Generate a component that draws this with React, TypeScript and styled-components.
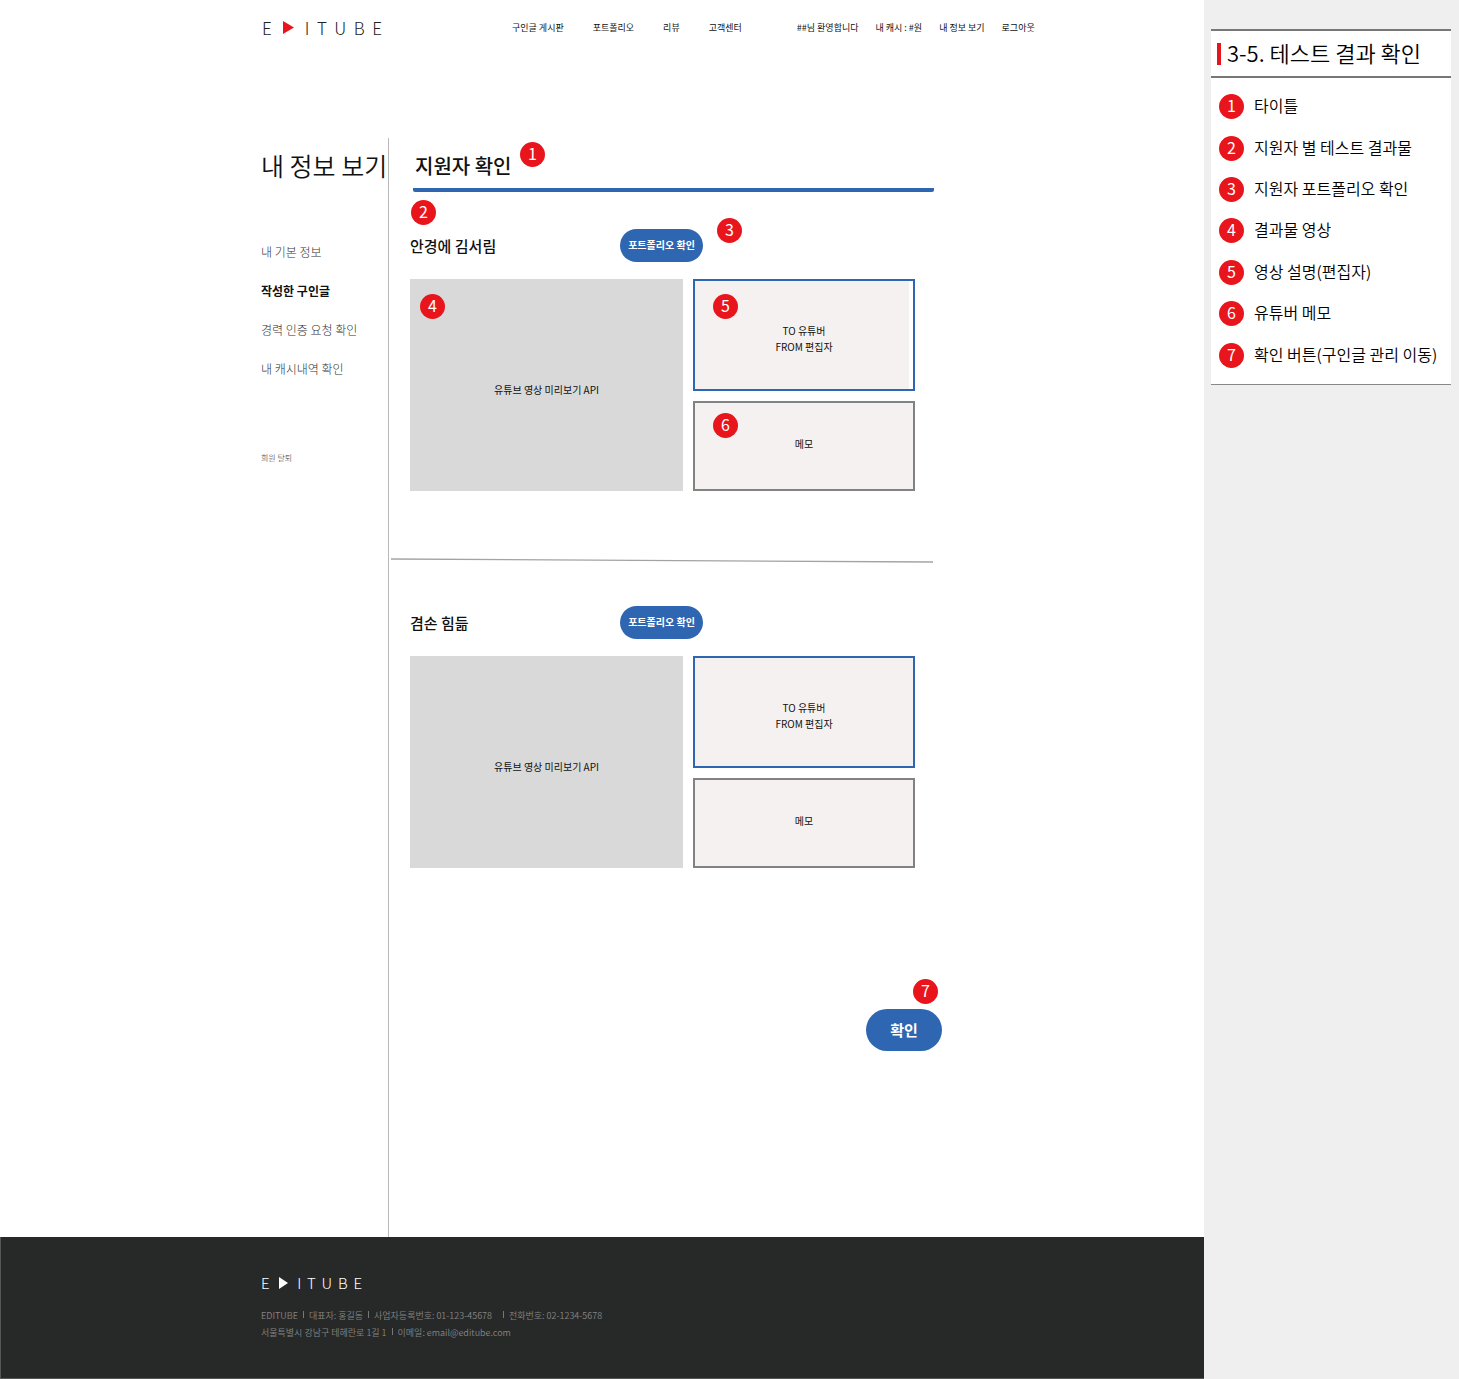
import React from "react";
import styled, { createGlobalStyle } from "styled-components";

const BLUE = "#2f66b1";
const RED = "#e8161c";

const GlobalStyle = createGlobalStyle`
  *, *::before, *::after { box-sizing: border-box; }
  body {
    margin: 0;
    background: #fff;
    color: #111;
    font-family: "Noto Sans CJK KR", "Noto Sans", sans-serif;
  }
  h1, h2, h3, p, ul, ol { margin: 0; padding: 0; font-weight: inherit; }
  ul, ol { list-style: none; }
  a { color: inherit; text-decoration: none; }
  button { font-family: inherit; cursor: pointer; }
`;

const Page = styled.div`
  display: grid;
  grid-template-columns: minmax(0, 1fr) 255px;
  min-height: 100vh;
`;

const Site = styled.div`
  display: grid;
  grid-template-rows: auto 1fr auto;
`;

const Header = styled.header`
  display: flex;
  align-items: center;
  height: 55px;
  margin-bottom: 83px;
  padding-left: 262px;
`;

const LogoLink = styled.a<{ $small?: boolean }>`
  display: flex;
  align-items: center;
  justify-content: space-between;
  width: ${(p) => (p.$small ? 101 : 120)}px;
  font-size: ${(p) => (p.$small ? 15 : 17)}px;
  line-height: 20px;
  font-weight: 300;
  color: ${(p) => (p.$small ? "#fff" : "#222")};
`;

const PlayMark = styled.svg<{ $small?: boolean }>`
  width: ${(p) => (p.$small ? 9 : 11)}px;
  height: ${(p) => (p.$small ? 12 : 13)}px;
  margin: 0 3px 0 4px;
  fill: ${(p) => (p.$small ? "#fff" : RED)};
`;

const Nav = styled.nav<{ $gap: number; $before: number }>`
  display: flex;
  gap: ${(p) => p.$gap}px;
  margin-left: ${(p) => p.$before}px;
  font-size: 9px;
  line-height: 16px;
  white-space: nowrap;
`;

const Body = styled.div`
  display: grid;
  grid-template-columns: 128px minmax(0, 553px);
  padding-left: 261px;
`;

const Side = styled.aside`
  border-right: 1px solid #b8b8b8;
  padding-top: 7px;
`;

const SideTitle = styled.h1`
  font-size: 25px;
  line-height: 40px;
  font-weight: 350;
  white-space: nowrap;
`;

const SideMenu = styled.ul`
  display: grid;
  gap: 19px;
  margin: 57px 0 69px;
  font-size: 12px;
  line-height: 20px;
`;

const SideLink = styled.a<{ $active?: boolean }>`
  color: ${(p) => (p.$active ? "#111" : "#333")};
  font-weight: ${(p) => (p.$active ? 700 : 200)};
  white-space: nowrap;
`;

const Leave = styled.a`
  display: block;
  font-size: 8px;
  line-height: 20px;
  font-weight: 200;
  color: #333;
`;

const Content = styled.main`
  padding-left: 21px;
`;

const TitleBar = styled.div`
  width: 521px;
  margin-left: 3px;
  padding: 12px 0 6px 2px;
  border-bottom: 4px solid ${BLUE};
  border-radius: 2px;
`;

const Title = styled.h2`
  position: relative;
  width: max-content;
  font-size: 20px;
  line-height: 32px;
  font-weight: 500;
`;

const Dot = styled.span`
  display: grid;
  justify-content: center;
  flex: none;
  width: 25px;
  height: 25px;
  border-radius: 50%;
  background: ${RED};
  color: #fff;
  font-size: 16px;
  line-height: 22px;
  font-weight: 400;
`;

const Pin = styled(Dot)<{ $x: number; $y: number }>`
  position: absolute;
  left: ${(p) => p.$x}px;
  top: ${(p) => p.$y}px;
`;

const Applicant = styled.article`
  width: 505px;
`;

const ApplicantHead = styled.div`
  position: relative;
  display: grid;
  grid-template-columns: 210px max-content;
  align-items: center;
  margin-bottom: 17px;
`;

const Name = styled.h3`
  font-size: 15px;
  line-height: 33px;
  font-weight: 500;
`;

const PillButton = styled.button<{ $large?: boolean }>`
  width: ${(p) => (p.$large ? 76 : 83)}px;
  height: ${(p) => (p.$large ? 42 : 33)}px;
  padding: 0 0 1px;
  border: 0;
  border-radius: 21px;
  background: ${BLUE};
  color: #fff;
  font-size: ${(p) => (p.$large ? 15 : 10)}px;
  line-height: 20px;
  font-weight: 700;
`;

const Panels = styled.div`
  display: grid;
  grid-template-columns: 273fr 222fr;
  grid-template-rows: 112px 90px;
  gap: 10px;
  font-size: 10px;
  line-height: 16px;
  text-align: center;
`;

const Panel = styled.div`
  position: relative;
  display: grid;
  place-content: center;
`;

const Video = styled(Panel)`
  grid-row: span 2;
  padding-top: 10px;
  background: #d9d9d9;
`;

const Note = styled(Panel)<{ $strip?: boolean }>`
  padding-top: 7px;
  border: 2px solid ${BLUE};
  background: #f5f1f0;
  box-shadow: ${(p) => (p.$strip ? "inset -4px 0 0 #fff" : "none")};
`;

const Memo = styled(Panel)`
  padding-bottom: 4px;
  border: 2px solid #828282;
  background: #f5f1f0;
`;

const SlantedRule = styled.svg`
  display: block;
  width: 542px;
  height: 5px;
  margin: 67px 0 43px -19px;
`;

const Actions = styled.div`
  display: flex;
  justify-content: flex-end;
  width: 532px;
  margin-top: 141px;
`;

const ActionSlot = styled.div`
  position: relative;
`;

const First = styled.div`
  position: relative;
  padding-top: 37px;
`;

const Footer = styled.footer`
  min-height: 142px;
  padding: 36px 0 36px 260px;
  border: solid #555756;
  border-width: 0 0 1px 1px;
  background: #272928;
  color: #858585;
  font-size: 9px;
  line-height: 17px;
  font-weight: 350;
`;

const FooterLines = styled.div`
  margin-top: 14px;
`;

const FooterLine = styled.p`
  display: flex;
  align-items: center;
`;

const Bar = styled.span<{ $wide?: boolean }>`
  width: 1px;
  height: 7px;
  margin: 0 5px 3px ${(p) => (p.$wide ? 11 : 5)}px;
  background: #777;
`;

const Rail = styled.aside`
  padding: 29px 8px 0 7px;
  background: #efefef;
`;

const Legend = styled.section`
  border-top: 2px solid #777;
  border-bottom: 1px solid #888;
  background: #fff;
  color: #000;
  font-weight: 350;
`;

const LegendTitle = styled.h2`
  display: flex;
  align-items: center;
  gap: 6px;
  height: 47px;
  padding-left: 6px;
  border-bottom: 2px solid #777;
  font-size: 22px;
  line-height: 32px;
  white-space: nowrap;

  &::before {
    content: "";
    width: 4px;
    height: 22px;
    background: ${RED};
  }
`;

const LegendTitleText = styled.span`
  padding-bottom: 4px;
`;

const LegendList = styled.ol`
  display: grid;
  grid-auto-rows: 1fr;
  height: 290px;
  margin: 8px 0;
  padding-left: 8px;
`;

const LegendItem = styled.li`
  display: flex;
  align-items: center;
  gap: 10px;
  font-size: 16px;
  line-height: 24px;
  white-space: nowrap;
`;

const LegendText = styled.span`
  padding-bottom: 3px;
`;

function Logo({ small }: { small?: boolean }) {
  return (
    <LogoLink href="#" aria-label="EDITUBE" $small={small}>
      <span>E</span>
      <PlayMark viewBox="0 0 11 13" preserveAspectRatio="none" $small={small} aria-hidden="true">
        <path d="M0 0 L11 6.5 L0 13 Z" />
      </PlayMark>
      <span>I</span>
      <span>T</span>
      <span>U</span>
      <span>B</span>
      <span>E</span>
    </LogoLink>
  );
}

function ApplicantResult({ name, pinned }: { name: string; pinned?: boolean }) {
  return (
    <Applicant>
      <ApplicantHead>
        <Name>{name}</Name>
        <PillButton type="button">포트폴리오 확인</PillButton>
        {pinned && <Pin $x={307} $y={-11}>3</Pin>}
      </ApplicantHead>
      <Panels>
        <Video>
          {pinned && <Pin $x={10} $y={15}>4</Pin>}
          <p>유튜브 영상 미리보기 API</p>
        </Video>
        <Note $strip={pinned}>
          {pinned && <Pin $x={18} $y={13}>5</Pin>}
          <p>TO 유튜버</p>
          <p>FROM 편집자</p>
        </Note>
        <Memo>
          {pinned && <Pin $x={18} $y={10}>6</Pin>}
          <p>메모</p>
        </Memo>
      </Panels>
    </Applicant>
  );
}

const menu = ["내 기본 정보", "작성한 구인글", "경력 인증 요청 확인", "내 캐시내역 확인"];
const legend = [
  "타이틀",
  "지원자 별 테스트 결과물",
  "지원자 포트폴리오 확인",
  "결과물 영상",
  "영상 설명(편집자)",
  "유튜버 메모",
  "확인 버튼(구인글 관리 이동)",
];

export default function App() {
  return (
    <>
      <GlobalStyle />
      <Page>
        <Site>
          <Header>
            <Logo />
            <Nav $gap={29} $before={130}>
              <a href="#">구인글 게시판</a>
              <a href="#">포트폴리오</a>
              <a href="#">리뷰</a>
              <a href="#">고객센터</a>
            </Nav>
            <Nav $gap={17} $before={55}>
              <span>##님 환영합니다</span>
              <a href="#">내 캐시 : #원</a>
              <a href="#">내 정보 보기</a>
              <a href="#">로그아웃</a>
            </Nav>
          </Header>
          <Body>
            <Side>
              <SideTitle>내 정보 보기</SideTitle>
              <SideMenu>
                {menu.map((label, i) => (
                  <li key={label}>
                    <SideLink href="#" $active={i === 1}>{label}</SideLink>
                  </li>
                ))}
              </SideMenu>
              <Leave href="#">회원 탈퇴</Leave>
            </Side>
            <Content>
              <TitleBar>
                <Title>
                  지원자 확인
                  <Pin $x={105} $y={-8}>1</Pin>
                </Title>
              </TitleBar>
              <First>
                <Pin $x={1} $y={8}>2</Pin>
                <ApplicantResult name="안경에 김서림" pinned />
              </First>
              <SlantedRule viewBox="0 0 542 5" aria-hidden="true">
                <line x1="0" y1="1" x2="542" y2="4" stroke="#a3a3a3" strokeWidth="1.3" />
              </SlantedRule>
              <ApplicantResult name="겸손 힘듦" />
              <Actions>
                <ActionSlot>
                  <Pin $x={47} $y={-30}>7</Pin>
                  <PillButton type="button" $large>확인</PillButton>
                </ActionSlot>
              </Actions>
            </Content>
          </Body>
          <Footer>
            <Logo small />
            <FooterLines>
              <FooterLine>
                EDITUBE<Bar />대표자: 홍길동<Bar />사업자등록번호: 01-123-45678<Bar $wide />전화번호: 02-1234-5678
              </FooterLine>
              <FooterLine>
                서울특별시 강남구 테헤란로 1길 1<Bar />이메일: email@editube.com
              </FooterLine>
            </FooterLines>
          </Footer>
        </Site>
        <Rail>
          <Legend>
            <LegendTitle>
              <LegendTitleText>3-5. 테스트 결과 확인</LegendTitleText>
            </LegendTitle>
            <LegendList>
              {legend.map((label, i) => (
                <LegendItem key={label}>
                  <Dot>{i + 1}</Dot>
                  <LegendText>{label}</LegendText>
                </LegendItem>
              ))}
            </LegendList>
          </Legend>
        </Rail>
      </Page>
    </>
  );
}
